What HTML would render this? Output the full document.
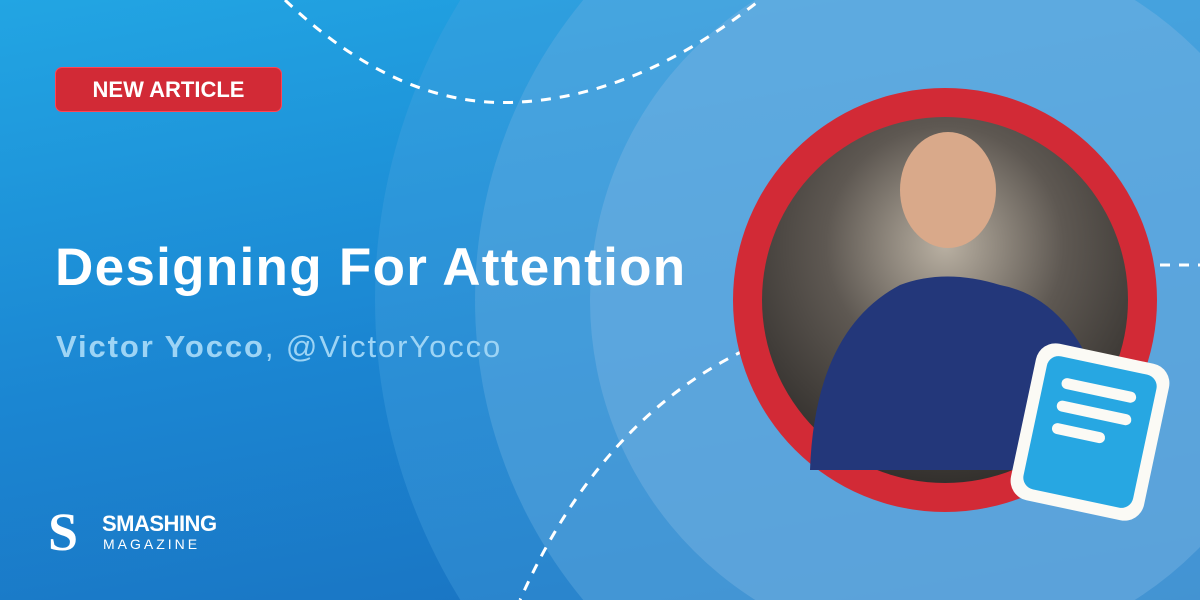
<!DOCTYPE html>
<html><head><meta charset="utf-8"><style>
html,body{margin:0;width:1200px;height:600px;overflow:hidden;font-family:"Liberation Sans",sans-serif;position:relative}
.bg{position:absolute;left:0;top:0;width:1200px;height:600px;background:linear-gradient(170deg,#22a5e3 0%,#1b86d2 50%,#1a6fbe 100%)}
svg{display:block}
</style></head><body>
<div class="bg"></div>
<svg width="1200" height="600" style="position:absolute;left:0;top:0">
<defs>
<radialGradient id="p" cx="0.5" cy="0.35" r="0.65">
<stop offset="0" stop-color="#b9b0a2"/><stop offset="0.5" stop-color="#5e5852"/><stop offset="1" stop-color="#33302d"/></radialGradient>
</defs>
<circle cx="945" cy="300" r="570" fill="#4aa3e0" opacity="0.35"/>
<circle cx="945" cy="300" r="470" fill="#6aaee2" opacity="0.4"/>
<circle cx="945" cy="300" r="355" fill="#7ab3e2" opacity="0.45"/>
<path d="M285 0 Q400 110 520 102 Q640 95 760 0" fill="none" stroke="#fff" stroke-width="3" stroke-dasharray="10 9"/>
<path d="M1160 265 L1200 265" stroke="#fff" stroke-width="3" stroke-dasharray="10 9"/>
<path d="M745 350 Q600 420 520 600" fill="none" stroke="#fff" stroke-width="3" stroke-dasharray="10 9"/>
<circle cx="945" cy="300" r="212" fill="#d22a36"/>
<circle cx="945" cy="300" r="183" fill="url(#p)"/>
<path d="M810 470 Q815 330 900 285 Q945 268 1000 285 Q1080 300 1110 420 L1100 470 Z" fill="#23377a"/>
<ellipse cx="948" cy="190" rx="48" ry="58" fill="#d9a98a"/>
<g transform="rotate(12 1090 432)">
<rect x="1022" y="352" width="136" height="160" rx="20" fill="#fbfaf5"/>
<rect x="1034" y="364" width="112" height="136" rx="12" fill="#27a7e2"/>
<rect x="1052" y="384" width="76" height="11" rx="5.5" fill="#fbfaf5"/>
<rect x="1052" y="407" width="76" height="11" rx="5.5" fill="#fbfaf5"/>
<rect x="1052" y="430" width="54" height="11" rx="5.5" fill="#fbfaf5"/>
</g>
</svg>
<div style="position:absolute;left:55px;top:67px;width:227px;height:45px;background:#d22a36;border-radius:7px;color:#fff;font-weight:bold;font-size:22px;line-height:43px;text-align:center;box-sizing:border-box;border:1px solid #f45">NEW ARTICLE</div>
<div style="position:absolute;left:55px;top:237px;color:#fff;font-weight:bold;font-size:53px;letter-spacing:1.3px;white-space:nowrap">Designing For Attention</div>
<div style="position:absolute;left:56px;top:329px;color:#9dd4f5;font-size:31px;letter-spacing:1.9px;white-space:nowrap"><b>Victor Yocco</b>, @VictorYocco</div>
<div style="position:absolute;left:48px;top:508px;width:44px;height:48px;color:#fff;font:bold 54px/48px 'Liberation Serif',serif">S</div>
<div style="position:absolute;left:102px;top:511px;color:#fff;font-weight:bold;font-size:22px;letter-spacing:-0.5px">SMASHING</div>
<div style="position:absolute;left:103px;top:536px;color:#fff;font-size:14px;letter-spacing:3px">MAGAZINE</div>
</body></html>
